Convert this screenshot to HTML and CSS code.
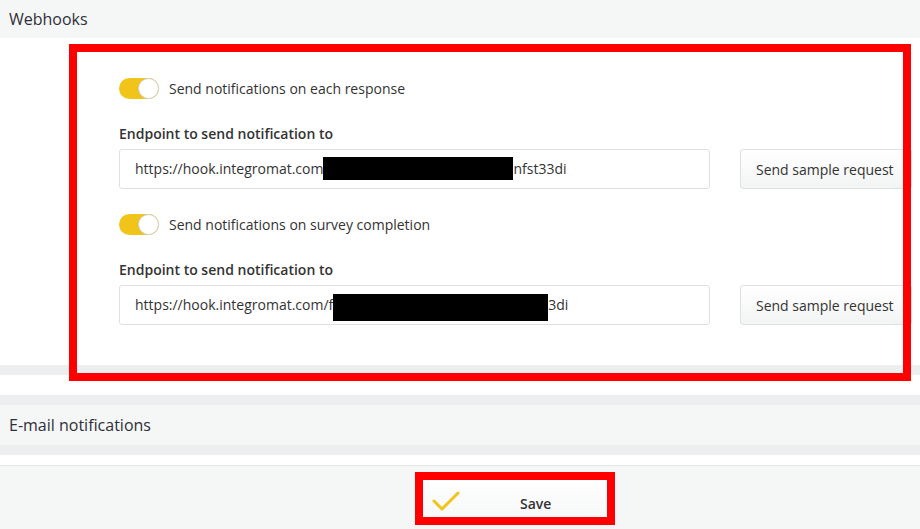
FILE: index.html
```html
<!DOCTYPE html>
<html lang="en">
<head>
<meta charset="UTF-8">
<title>Survey settings</title>
<link rel="stylesheet" href="styles.css">
</head>
<body>
    <div class="panel-title">Webhooks</div>
    <div class="panel-body">
        <div class="switch-row">
            <span class="switch"><span class="knob"></span></span>
            <span>Send notifications on each response</span>
        </div>
        <div class="field-label">Endpoint to send notification to</div>
        <div class="field-row">
            <div class="field">https://hook.integromat.com<span class="redact redact-a"></span>nfst33di</div>
            <button class="btn">Send sample request</button>
        </div>

        <div class="switch-row">
            <span class="switch"><span class="knob"></span></span>
            <span>Send notifications on survey completion</span>
        </div>
        <div class="field-label">Endpoint to send notification to</div>
        <div class="field-row">
            <div class="field">https://hook.integromat.com/f<span class="redact redact-b"></span>3di</div>
            <button class="btn">Send sample request</button>
        </div>
    </div>
    <div class="strip"></div>
    <div class="gap"></div>
    <div class="strip"></div>
    <div class="panel-title email">E-mail notifications</div>
    <div class="strip"></div>
    <div class="gap"></div>
    <div class="footer">
        <button class="save-btn">
            <svg class="check" width="28" height="22" viewBox="0 0 28 22">
                <polyline points="2,10 10,18 26,2" fill="none" stroke="#f0c419" stroke-width="3" stroke-linecap="round" stroke-linejoin="round"/>
            </svg>
            <span>Save</span>
        </button>
    </div>

    <div class="mark mark-webhooks"></div>
    <div class="mark mark-save"></div>
</body>
</html>
```

FILE: styles.css
```css
body {
    margin: 0;
    font-family: "Open Sans", Arial, sans-serif;
    font-size: 14px;
    color: #333;
    background-color: #fff;
    position: relative;
    height: 529px;
    overflow: hidden;
}
.panel-title {
    height: 38px;
    line-height: 38px;
    padding-left: 9px;
    font-size: 16px;
    background-color: #f5f6f6;
    color: #2f2f3a;
}
.panel-title.email {
    height: 40px;
    line-height: 40px;
}
.panel-body {
    height: 327px;
    padding-left: 119px;
    padding-top: 40px;
    box-sizing: border-box;
}
.switch-row {
    display: flex;
    align-items: center;
    height: 21px;
    gap: 10px;
}
.switch {
    position: relative;
    width: 40px;
    height: 21px;
    border-radius: 11px;
    background-color: #f0c419;
}
.knob {
    position: absolute;
    right: 0;
    top: 0;
    width: 19px;
    height: 19px;
    border-radius: 50%;
    background-color: #fff;
    border: 1px solid #cfcfcf;
}
.field-label {
    margin-top: 25px;
    line-height: 20px;
    font-weight: 600;
}
.field-row {
    display: flex;
    gap: 30px;
    margin-top: 5px;
    margin-bottom: 25px;
}
.field {
    width: 591px;
    height: 40px;
    line-height: 38px;
    box-sizing: border-box;
    padding-left: 15px;
    border: 1px solid #dde1e3;
    border-radius: 3px;
    white-space: nowrap;
    overflow: hidden;
}
.redact {
    display: inline-block;
    background-color: #000;
    vertical-align: middle;
}
.redact-a {
    width: 190px;
    height: 23px;
    margin-top: -3px;
}
.redact-b {
    width: 215px;
    height: 27px;
    margin-top: 3px;
}
.btn {
    width: 172px;
    height: 40px;
    padding: 0 15px;
    text-align: left;
    font-family: inherit;
    font-size: 14px;
    color: #333;
    border: 1px solid #dde1e3;
    border-radius: 3px;
    background: linear-gradient(#ffffff, #f3f4f4);
}
.strip {
    height: 10px;
    background-color: #eceeef;
}
.gap {
    height: 20px;
}
.gap + .footer {
    margin-top: -10px;
}
.footer {
    height: 64px;
    border-top: 1px solid #e3e5e6;
    background-color: #f5f6f6;
    padding: 10px 0 0 419px;
    box-sizing: border-box;
}
.save-btn {
    display: flex;
    align-items: center;
    width: 192px;
    height: 46px;
    padding: 0 0 0 12px;
    font-family: inherit;
    font-size: 14px;
    font-weight: 600;
    color: #333;
    border: 1px solid #dde1e3;
    border-radius: 3px;
    background: linear-gradient(#ffffff, #f6f7f7);
}
.check {
    margin-top: 6px;
}
.save-btn span {
    margin-left: 60px;
    margin-top: 8px;
}
.mark {
    position: absolute;
    border: 8px solid #ff0000;
    box-sizing: border-box;
}
.mark-webhooks {
    left: 69px;
    top: 44px;
    width: 842px;
    height: 337px;
}
.mark-save {
    left: 415px;
    top: 472px;
    width: 200px;
    height: 53px;
}
```
